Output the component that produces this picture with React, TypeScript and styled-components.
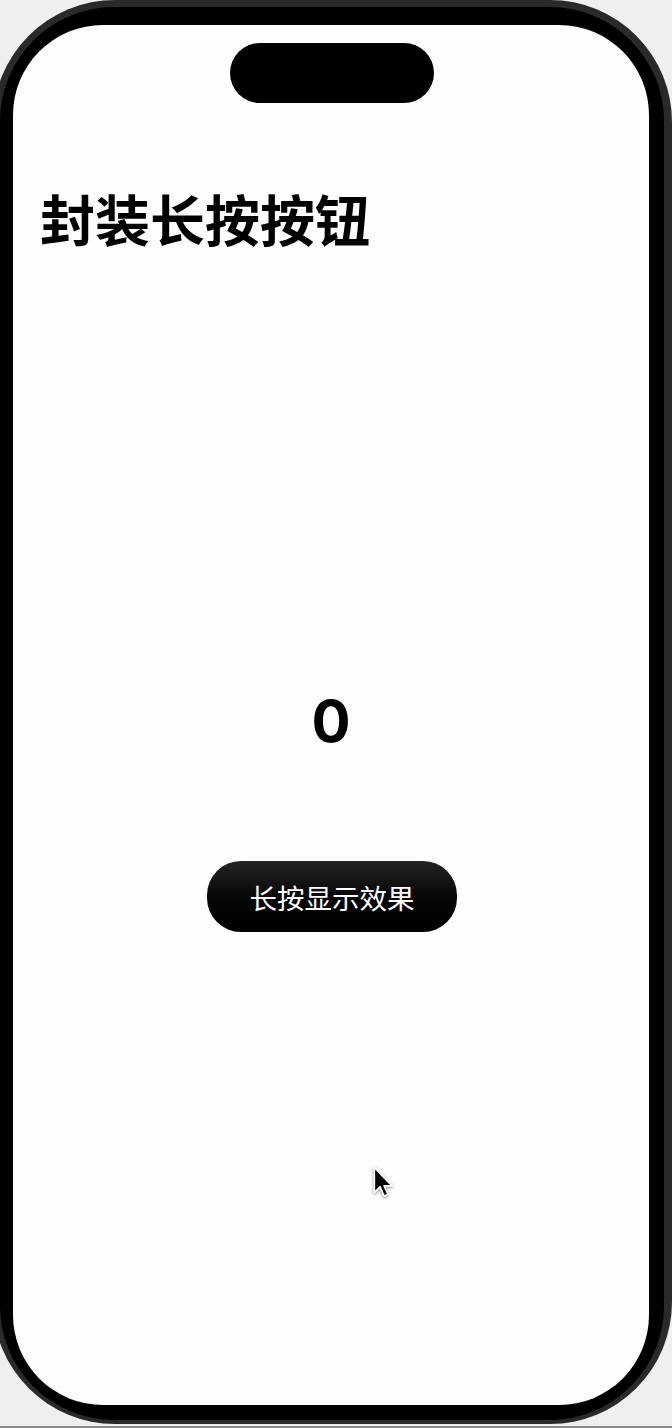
import styled, { createGlobalStyle } from "styled-components";

const GlobalStyle = createGlobalStyle`
  html, body {
    margin: 0;
    padding: 0;
    background: #efefef;
  }
  body {
    font-family: "Noto Sans CJK SC", "Noto Sans", sans-serif;
  }
`;

export default function App() {
  return (
    <>
      <GlobalStyle />
      <Page>
        <Phone>
          <Bezel>
            <Screen>
              <Island />
              <Title>封装长按按钮</Title>
              <Body>
                <Counter>0</Counter>
                <LongPressButton>长按显示效果</LongPressButton>
              </Body>
            </Screen>
          </Bezel>
        </Phone>
        <Cursor viewBox="0 0 20 30" width="23" height="35">
          <path
            d="M2 1 L2 23 L7 18 L10.5 26 L14 24.5 L10.5 17 L17.5 17 Z"
            fill="#000"
            stroke="#fff"
            strokeWidth="1.5"
            strokeLinejoin="round"
          />
        </Cursor>
      </Page>
    </>
  );
}

const Page = styled.div`
  position: relative;
  width: 672px;
  height: 1428px;
  box-sizing: border-box;
  overflow: hidden;
  border-bottom: 2px solid #8a8a8a;
`;

const Phone = styled.div`
  width: 679px;
  height: 1424px;
  margin-left: -7px;
  box-sizing: border-box;
  padding: 7px 8px 4px 7px;
  border-radius: 122px;
  background: #2a2a2a;
`;

const Bezel = styled.div`
  height: 100%;
  box-sizing: border-box;
  padding: 18px 15px 15px 13px;
  border-radius: 114px;
  background: #000;
`;

const Screen = styled.div`
  height: 100%;
  display: flex;
  flex-direction: column;
  border-radius: 90px;
  background: #fdfdfd;
  overflow: hidden;
`;

const Island = styled.div`
  align-self: center;
  width: 204px;
  height: 60px;
  margin-top: 18px;
  margin-left: 2px;
  border-radius: 30px;
  background: #000;
`;

const Title = styled.h1`
  margin: 81px 0 0 27px;
  font-family: "Noto Sans CJK SC", sans-serif;
  font-size: 55px;
  font-weight: 700;
  line-height: 66px;
  color: #000;
`;

const Body = styled.div`
  display: flex;
  flex-direction: column;
  align-items: center;
  margin-top: 436px;
  gap: 105px;
`;

const Counter = styled.div`
  font-family: "Inter", "Noto Sans", sans-serif;
  font-size: 58px;
  font-weight: 700;
  line-height: 70px;
  color: #000;
`;

const LongPressButton = styled.button`
  width: 250px;
  height: 71px;
  margin-left: 2px;
  border: none;
  border-radius: 34px;
  background: linear-gradient(180deg, #242424 0%, #050505 55%, #000 100%);
  color: #fff;
  font-family: "Noto Sans CJK SC", sans-serif;
  font-size: 27.5px;
  font-weight: 400;
  cursor: pointer;
`;

const Cursor = styled.svg`
  position: absolute;
  left: 372px;
  top: 1166px;
  filter: drop-shadow(0 1px 1.5px rgba(0, 0, 0, 0.45));
`;
